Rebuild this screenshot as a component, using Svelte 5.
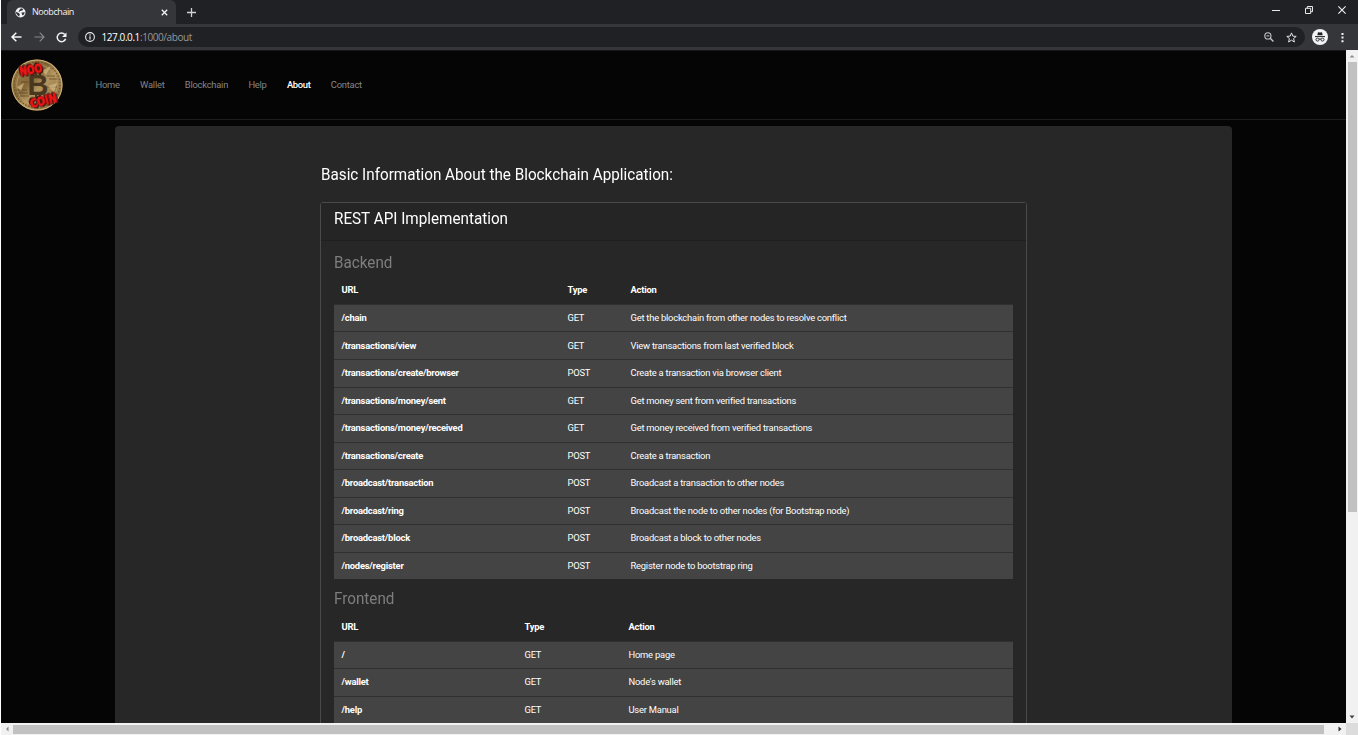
<script>
  const nav = ['Home', 'Wallet', 'Blockchain', 'Help', 'About', 'Contact'];
  const backend = [
    ['/chain', 'GET', 'Get the blockchain from other nodes to resolve conflict'],
    ['/transactions/view', 'GET', 'View transactions from last verified block'],
    ['/transactions/create/browser', 'POST', 'Create a transaction via browser client'],
    ['/transactions/money/sent', 'GET', 'Get money sent from verified transactions'],
    ['/transactions/money/received', 'GET', 'Get money received from verified transactions'],
    ['/transactions/create', 'POST', 'Create a transaction'],
    ['/broadcast/transaction', 'POST', 'Broadcast a transaction to other nodes'],
    ['/broadcast/ring', 'POST', 'Broadcast the node to other nodes (for Bootstrap node)'],
    ['/broadcast/block', 'POST', 'Broadcast a block to other nodes'],
    ['/nodes/register', 'POST', 'Register node to bootstrap ring']
  ];
  const frontend = [
    ['/', 'GET', 'Home page'],
    ['/wallet', 'GET', "Node's wallet"],
    ['/help', 'GET', 'User Manual']
  ];
</script>

{#snippet table(rows, kind)}
  <div class="table {kind}">
    <div class="row head"><span>URL</span><span>Type</span><span>Action</span></div>
    {#each rows as r}
      <div class="row"><b>{r[0]}</b><span>{r[1]}</span><span>{r[2]}</span></div>
    {/each}
  </div>
{/snippet}

<div class="window">
  <div class="strip">
    <div class="tab">
      <svg width="11" height="11" viewBox="0 0 11 11"><circle cx="5.5" cy="5.5" r="5" fill="#f1f3f4" /><path d="M1 4.8 3.3 5.7 4.8 7.1 4.3 9.4 3 8.8 1.3 6.8ZM6 1.2 8.2 2 7.4 3.6 5.2 4 4.4 5 3.6 4.3 4.6 2.8ZM6.4 5.6 9.7 5.2 9.2 7.3 7.7 8.5 7 7.2Z" fill="#35363a" /></svg>
      <span>Noobchain</span>
      <svg class="close" width="7" height="7" viewBox="0 0 7 7"><path d="M.8.8 6.2 6.2M6.2.8.8 6.2" stroke="#f1f3f4" stroke-width="1.3" /></svg>
    </div>
    <svg class="plus" width="9" height="9" viewBox="0 0 9 9"><path d="M4.5 0V9M0 4.5H9" stroke="#d0d2d5" stroke-width="1.3" /></svg>
    <div class="controls">
      <svg width="8" height="8" viewBox="0 0 8 8"><path d="M0 4.5H8" stroke="#e8e8e8" /></svg>
      <svg width="8" height="8" viewBox="0 0 8 8"><path d="M.5 2.3H5.7V7.5H.5ZM2.3 2.3V.5H7.5V5.7H5.7" fill="none" stroke="#e8e8e8" /></svg>
      <svg width="8" height="8" viewBox="0 0 8 8"><path d="M.4.4 7.6 7.6M7.6.4.4 7.6" stroke="#f4f4f4" stroke-width="1.1" /></svg>
    </div>
  </div>

  <div class="toolbar">
    <svg class="back" width="11" height="10" viewBox="0 0 11 10"><path d="M10.5 5H1.2M5.3.7 1 5 5.3 9.3" fill="none" stroke="#f4f4f4" stroke-width="1.5" /></svg>
    <svg class="fwd" width="11" height="10" viewBox="0 0 11 10"><path d="M.5 5H9.8M5.7.7 10 5 5.7 9.3" fill="none" stroke="#86888b" stroke-width="1.2" /></svg>
    <svg class="reload" width="11" height="11" viewBox="0 0 11 11"><path d="M8.8 2.6A4.3 4.3 0 1 0 9.6 6.7" fill="none" stroke="#f4f4f4" stroke-width="1.5" /><path d="M10.5.4V4.9H6Z" fill="#f4f4f4" /></svg>
    <div class="omni">
      <svg width="10" height="10" viewBox="0 0 10 10"><circle cx="5" cy="5" r="4.4" fill="none" stroke="#e8eaed" stroke-width="1.1" /><path d="M5 4.3V7.6M5 2.3V3.4" stroke="#e8eaed" stroke-width="1.2" /></svg>
      <span class="url"><span>127.0.0.1</span>:1000/about</span>
      <svg class="zoom" width="10" height="10" viewBox="0 0 10 10"><circle cx="3.9" cy="3.9" r="3.1" fill="none" stroke="#c6c8ca" stroke-width="1.1" /><path d="M6.2 6.2 9.4 9.4" stroke="#c6c8ca" stroke-width="1.4" /><path d="M2.4 3.9H5.4" stroke="#c6c8ca" /></svg>
      <svg width="11" height="11" viewBox="0 0 11 11"><path d="M5.5.9 6.8 4.1 10.2 4.4 7.6 6.6 8.4 10 5.5 8.2 2.6 10 3.4 6.6.8 4.4 4.2 4.1Z" fill="none" stroke="#e0e2e4" /></svg>
    </div>
    <svg class="incog" width="16" height="16" viewBox="0 0 16 16"><circle cx="8" cy="8" r="8" fill="#f1f3f4" /><path d="M5.3 6.3 6 3.2 8 3.6 10 3.2 10.7 6.3Z" fill="#202124" /><path d="M3 7.6H13M7 10.3Q8 9.6 9 10.3" stroke="#202124" fill="none" /><circle cx="5.5" cy="10.6" r="1.5" fill="none" stroke="#202124" stroke-width=".9" /><circle cx="10.5" cy="10.6" r="1.5" fill="none" stroke="#202124" stroke-width=".9" /></svg>
    <svg class="dots" width="3" height="11" viewBox="0 0 3 11"><path d="M.5 1h2v2h-2zM.5 4.6h2v2h-2zM.5 8.2h2v2h-2z" fill="#f1f3f4" /></svg>
  </div>

  <div class="body">
    <div class="page">
      <nav>
        <svg class="logo" width="52" height="52" viewBox="0 0 52 52">
          <defs>
            <linearGradient id="gold" x1="0" y1="0" x2="1" y2="1"><stop offset="0" stop-color="#a58349" /><stop offset=".4" stop-color="#84683a" /><stop offset=".55" stop-color="#b39560" /><stop offset="1" stop-color="#806033" /></linearGradient>
          </defs>
          <circle cx="26" cy="26" r="25.6" fill="url(#gold)" />
          <circle cx="26" cy="26" r="25" fill="none" stroke="#d2b77c" stroke-width=".9" />
          <circle cx="26" cy="26" r="22.9" fill="none" stroke="#6b5229" stroke-width="1.1" stroke-dasharray="1.5 1.6" />
          <circle cx="26" cy="26" r="20.3" fill="none" stroke="#c5a76b" stroke-width=".6" />
          <path d="M5 31H16M7 34H17M9 37H18M36 17H44M38 20H46M35 28H46M10 23H17" stroke="#59431f" stroke-width=".7" />
          <path d="M31 12 40 7 35 16ZM37 27 46 24 43 33ZM6 28 13 24 10 32Z" fill="#e0c78e" opacity=".6" />
          <text x="27" y="36" class="bit">B</text>
          <path d="M25 13V17M29 13V17M25 34V39M29 34V39" stroke="#49371f" stroke-width="2" />
          <text x="20" y="15" class="red" textLength="23" lengthAdjust="spacingAndGlyphs" transform="rotate(-10 20 11)">NOO</text>
          <text x="32.5" y="46" class="red" textLength="27" lengthAdjust="spacingAndGlyphs" transform="rotate(-14 32.5 42)">COIN</text>
        </svg>
        <div class="links">
          {#each nav as n}<span class:active={n === 'About'}>{n}</span>{/each}
        </div>
      </nav>
      <main>
        <h1><span class="narrow">Basic Information About the Blockchain Application:</span></h1>
        <div class="card">
          <div class="cardhead"><span class="narrow">REST API Implementation</span></div>
          <div class="content">
            <h2><span class="narrow">Backend</span></h2>
            {@render table(backend, 'be')}
            <h2 class="second"><span class="narrow">Frontend</span></h2>
            {@render table(frontend, 'fe')}
          </div>
        </div>
      </main>
    </div>
    <div class="vbar">
      <svg width="12" height="12" viewBox="0 0 12 12"><path d="M3.5 7.5 6 5 8.5 7.5Z" fill="#8c8c8c" /></svg>
      <div class="vthumb"></div>
      <svg class="end" width="12" height="12" viewBox="0 0 12 12"><path d="M3.5 4.5H8.5L6 7.5Z" fill="#404040" /></svg>
    </div>
  </div>
  <div class="hbar">
    <svg width="12" height="12" viewBox="0 0 12 12"><path d="M7.5 3.5V8.5L5 6Z" fill="#8c8c8c" /></svg>
    <div class="hthumb"></div>
    <svg class="end" width="12" height="12" viewBox="0 0 12 12"><path d="M4.5 3.5V8.5L7.5 6Z" fill="#303030" /></svg>
    <div class="corner"></div>
  </div>
</div>

<style>
  :global(body) { background: #fff; overflow: hidden; }
  * { box-sizing: border-box; }
  svg { display: block; flex: none; overflow: visible; }
  .window { width: 1358px; height: 735px; padding-left: 1px; display: flex; flex-direction: column; font-family: Roboto, sans-serif; overflow: hidden; }
  .strip { height: 24px; flex: none; background: #202124; display: flex; align-items: center; }
  .tab { height: 24px; width: 169px; margin-left: 6px; padding: 0 8px 0 8px; background: #35363a; border-radius: 6px 6px 0 0; display: flex; align-items: center; font: 9px 'Open Sans', sans-serif; letter-spacing: -.42px; color: #f1f3f4; }
  .tab span { margin-left: 6px; padding-bottom: 1px; }
  .close { margin-left: auto; }
  .plus { margin-left: 11px; }
  .controls { margin-left: auto; margin-right: 12px; padding-bottom: 4px; display: flex; gap: 25px; }
  .toolbar { height: 26px; flex: none; background: #35363a; display: flex; align-items: center; padding-left: 10px; }
  .fwd { margin-left: 12px; }
  .reload { margin-left: 11px; }
  .omni { margin-left: 11px; height: 20px; width: 1227px; border-radius: 10px; background: #202124; display: flex; align-items: center; padding: 0 8px 0 7px; font: 10px 'Open Sans', sans-serif; letter-spacing: -.42px; color: #96999d; }
  .url { margin-left: 6.5px; white-space: nowrap; }
  .url span { color: #fff; }
  .zoom { margin-left: auto; margin-right: 12px; }
  .incog { margin-left: 7px; }
  .dots { margin-left: 13px; }
  .body { height: 673px; flex: none; display: flex; }
  .page { width: 1345px; background: #050505; overflow: hidden; }
  nav { height: 70px; border-top: 1px solid #161616; border-bottom: 1px solid #1c1c1c; display: flex; align-items: center; padding-left: 10px; }
  .bit { font: bold 29px 'Liberation Sans', sans-serif; fill: #49371f; text-anchor: middle; }
  .red { font: bold 11.5px 'DejaVu Sans', sans-serif; fill: #f31616; stroke: #f31616; stroke-width: .9px; text-anchor: middle; filter: drop-shadow(1px 1px 0 #25100c) drop-shadow(-1px -.5px 0 #25100c); }
  .links { display: flex; gap: 20.3px; margin-left: 32.5px; padding-bottom: 2px; font-size: 9.4px; letter-spacing: -.24px; color: #858585; }
  .links .active { color: #fff; font-weight: 500; letter-spacing: -.3px; }
  main { margin: 6px 0 0 114px; width: 1117px; height: 700px; background: #272727; border-radius: 4px; padding: 38px 205px 0; }
  .narrow { display: inline-block; transform: scaleX(.93); transform-origin: left; white-space: nowrap; }
  h1 { margin: 0; height: 38px; padding-left: .5px; line-height: 22px; font-size: 16.4px; font-weight: 400; color: #fff; }
  .card { width: 707px; height: 600px; border: 1px solid #4a4a4a; border-radius: 3px; }
  .cardhead { height: 38px; padding-left: 13px; line-height: 31px; font-size: 16.4px; color: #fff; background: #252525; border-bottom: 1px solid #1f1f1f; }
  .content { padding: 11px 13px 0; }
  h2 { margin: 0; height: 24.35px; line-height: 21px; font-size: 16.4px; font-weight: 400; color: #7e7e7e; }
  .second { margin-top: 8.6px; height: 25px; }
  .table { width: 679px; }
  .row { display: grid; height: 27.56px; align-items: center; padding: 0 0 .4px 7.5px; background: #444; border-top: 1px solid #303030; font-size: 9.4px; letter-spacing: -.22px; line-height: 14px; color: #fff; white-space: nowrap; }
  .be .row { grid-template-columns: 226px 63px 1fr; }
  .fe .row { grid-template-columns: 183px 104px 1fr; }
  .row b { font-weight: 700; }
  .head { background: none; border-color: transparent; font-weight: 700; }
  .vbar { width: 12px; background: #f1f1f1; display: flex; flex-direction: column; align-items: center; }
  .vthumb { width: 9px; height: 450px; background: #c1c1c1; }
  .vbar .end { margin-top: auto; }
  .hbar { height: 12px; flex: none; background: #f1f1f1; display: flex; align-items: center; }
  .hthumb { width: 1311px; height: 9px; background: #c1c1c1; }
  .hbar .end { margin-left: auto; }
  .corner { width: 12px; height: 12px; background: #dcdcdc; }
</style>
